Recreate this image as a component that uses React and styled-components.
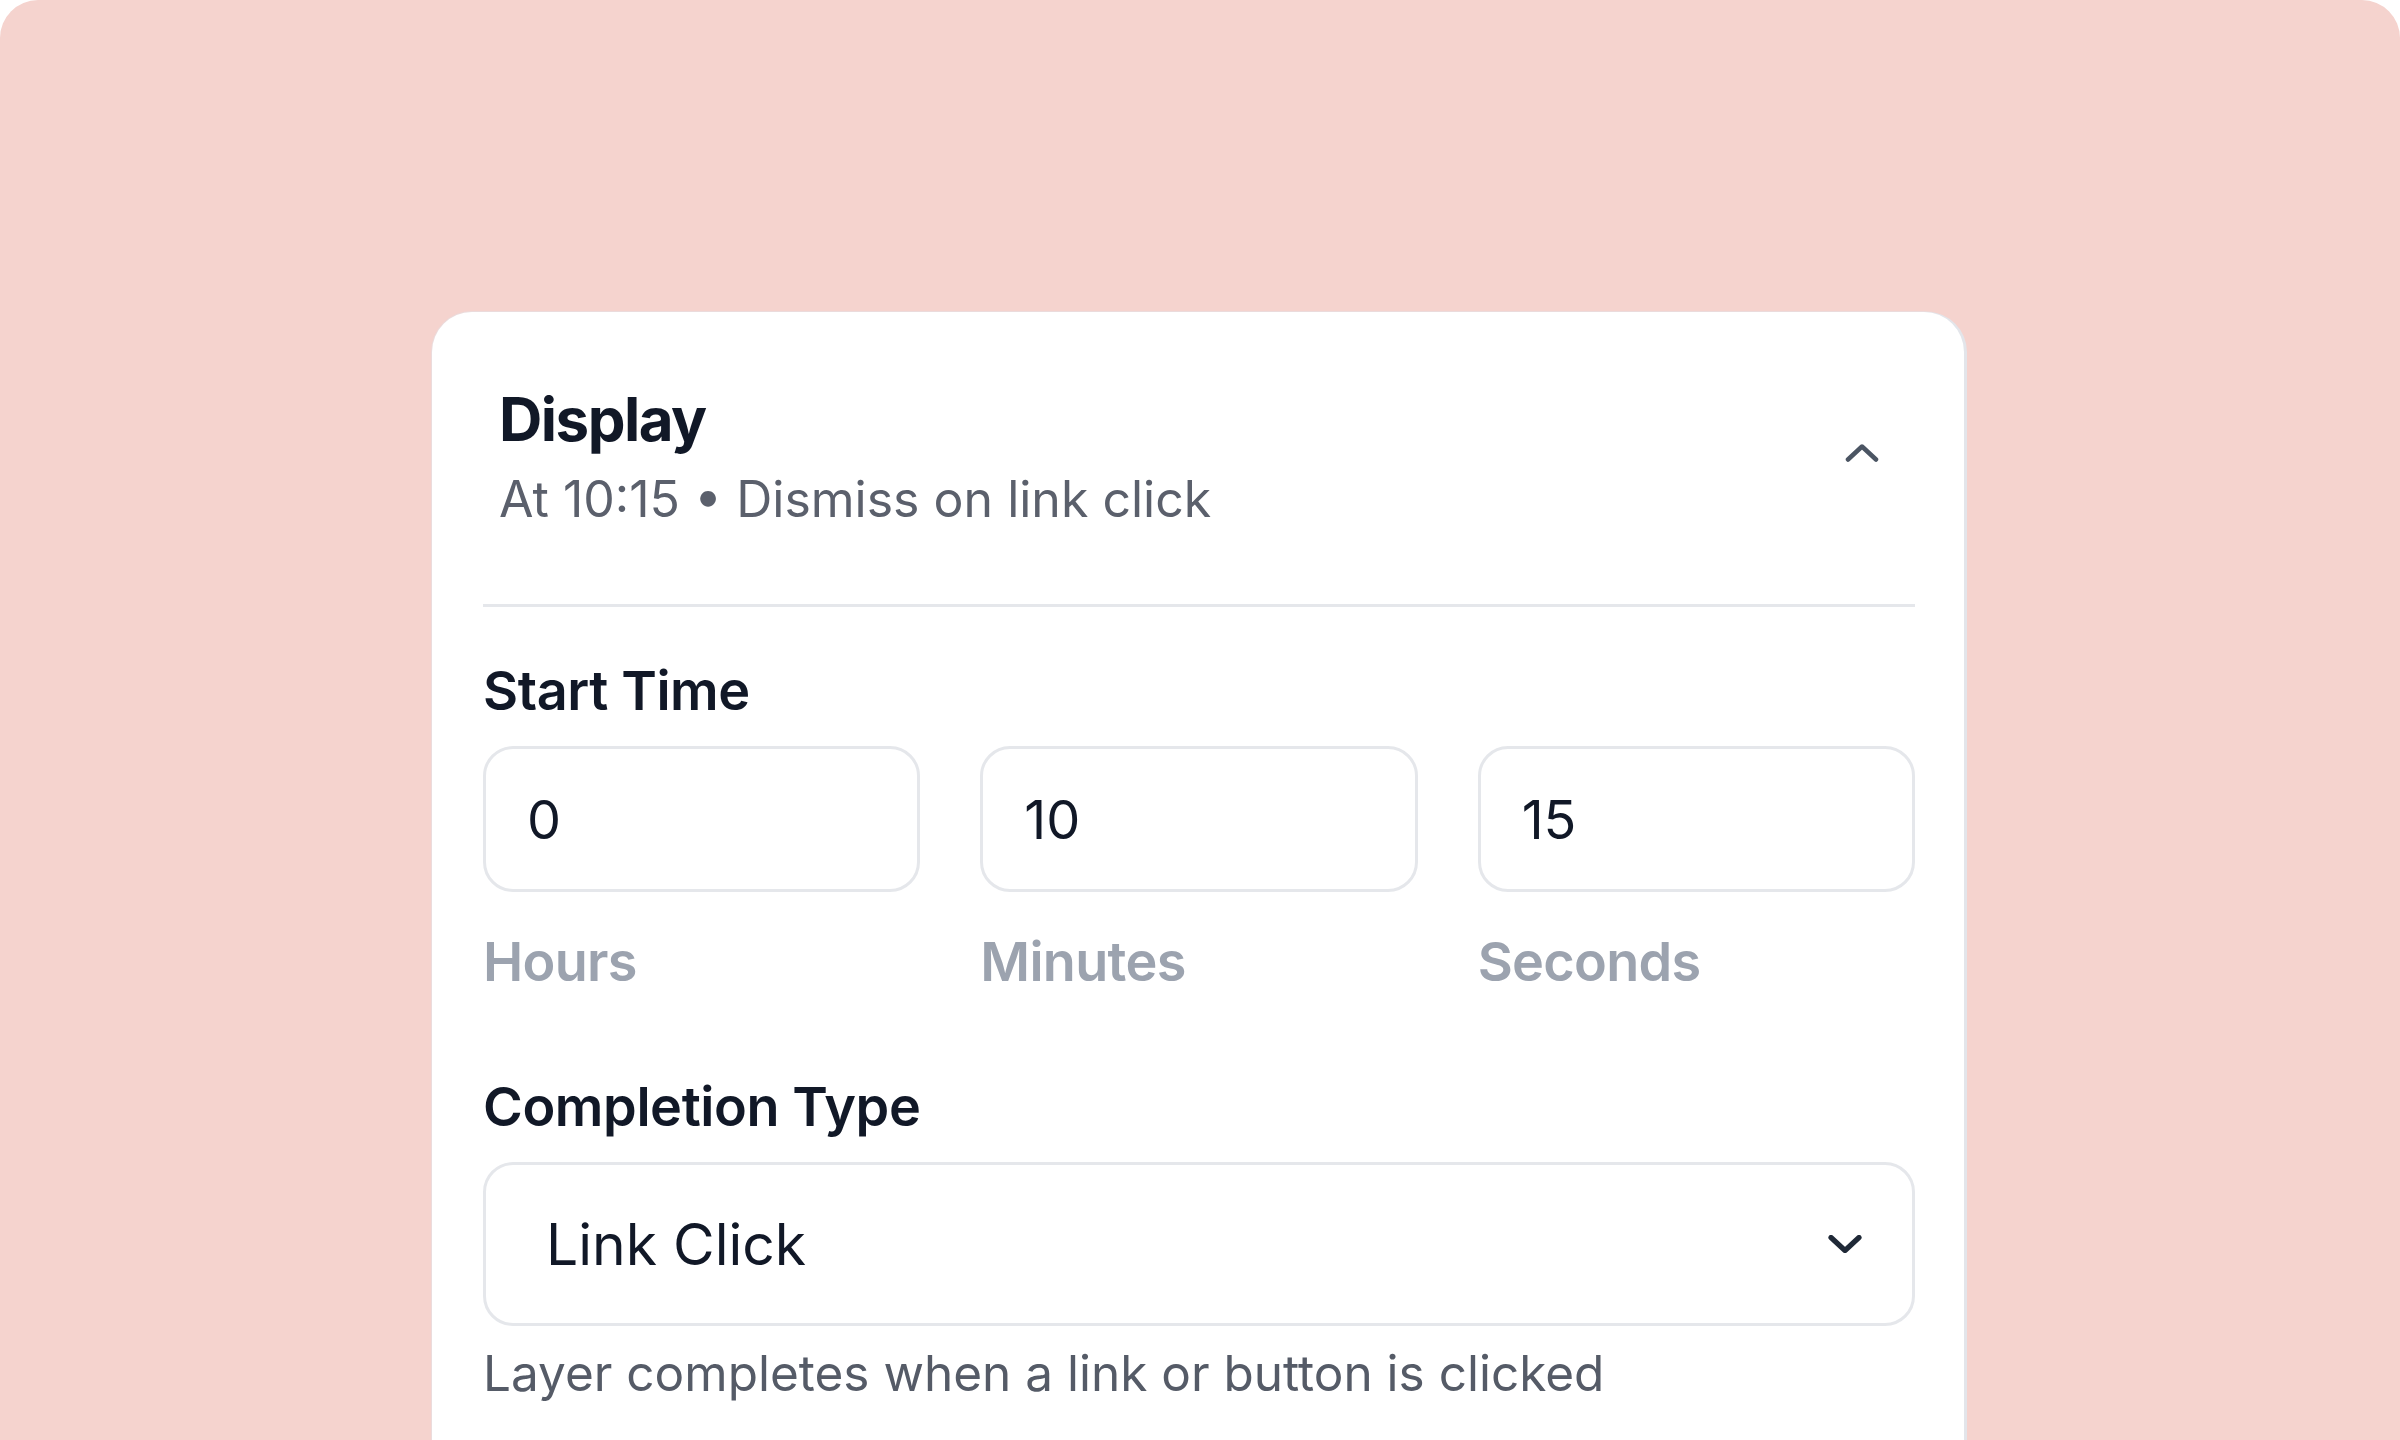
import React from "react";
import styled, { createGlobalStyle } from "styled-components";

const GlobalStyle = createGlobalStyle`
  html, body {
    margin: 0;
    padding: 0;
    background: #ffffff;
    overflow: hidden;
  }
  body {
    font-family: Inter, "Noto Sans", sans-serif;
    -webkit-font-smoothing: antialiased;
  }
  * { box-sizing: border-box; }
`;

const Panel = styled.main`
  height: 1440px;
  background: #f5d3ce;
  border-radius: 38px 38px 0 0;
  padding: 312px 0 0 432px;
  overflow: hidden;
`;

const Card = styled.section`
  width: 1532px;
  background: #ffffff;
  border-radius: 40px;
  padding: 0 49px 140px 51px;
  box-shadow: 3px 0 0 0 #e3e5ea, 0 0 0 1px rgba(226, 228, 234, 0.5);
`;

const Header = styled.header`
  display: flex;
  align-items: center;
  justify-content: space-between;
  padding: 77px 36px 80px 16px;
`;

const TitleBlock = styled.div`
  display: flex;
  flex-direction: column;
  gap: 25px;
`;

const Title = styled.h2`
  margin: 0;
  font-size: 60px;
  line-height: 1;
  font-weight: 700;
  letter-spacing: -1.5px;
  color: #111827;
`;

const Summary = styled.p`
  margin: 0;
  font-size: 50px;
  line-height: 1;
  font-weight: 400;
  color: #5b606c;
`;

const Toggle = styled.svg`
  flex: none;
  margin-bottom: 8px;
  color: #4b5563;
`;

const Divider = styled.div`
  height: 3px;
  background: #e5e7eb;
`;

const SectionLabel = styled.h3`
  margin: ${(p) => p.$mt}px 0 0;
  font-size: 54px;
  line-height: 1;
  font-weight: 600;
  letter-spacing: -0.4px;
  color: #111827;
`;

const TimeGrid = styled.div`
  display: grid;
  grid-template-columns: repeat(3, 1fr);
  gap: 60px;
  margin-top: 28px;
`;

const TimeField = styled.label`
  display: flex;
  flex-direction: column;
`;

const TimeInput = styled.input`
  width: 100%;
  height: 146px;
  border: 3px solid #e5e7eb;
  border-radius: 30px;
  padding: 0 0 0 41px;
  font-family: Inter, "Noto Sans", sans-serif;
  font-size: 54px;
  font-weight: 400;
  color: #111827;
  background: #ffffff;
  outline: none;
`;

const UnitLabel = styled.span`
  margin-top: 43px;
  font-size: 54px;
  line-height: 1;
  font-weight: 600;
  letter-spacing: -0.7px;
  color: #9ca3af;
`;

const SelectBox = styled.button`
  margin-top: 28px;
  width: 100%;
  height: 164px;
  border: 3px solid #e5e7eb;
  border-radius: 30px;
  background: #ffffff;
  display: flex;
  align-items: center;
  justify-content: space-between;
  padding: 0 50px 0 60px;
  font-family: Inter, "Noto Sans", sans-serif;
  font-size: 57px;
  font-weight: 400;
  color: #111827;
  cursor: pointer;
`;

const SelectChevron = styled.svg`
  flex: none;
  color: #1f2937;
`;

const Helper = styled.p`
  margin: 23px 0 0;
  font-size: 49.5px;
  line-height: 1;
  font-weight: 400;
  color: #555b67;
`;

const ChevronUp = () => (
  <Toggle width="34" height="18" viewBox="0 0 34 18" fill="none">
    <polyline
      points="3,15.5 17,2.5 31,15.5"
      stroke="currentColor"
      strokeWidth="4.5"
      strokeLinecap="round"
      strokeLinejoin="round"
    />
  </Toggle>
);

const ChevronDown = () => (
  <SelectChevron width="34" height="18" viewBox="0 0 34 18" fill="none">
    <polyline
      points="3,2.5 17,15.5 31,2.5"
      stroke="currentColor"
      strokeWidth="5.2"
      strokeLinecap="round"
      strokeLinejoin="round"
    />
  </SelectChevron>
);

const timeParts = [
  { value: "0", unit: "Hours" },
  { value: "10", unit: "Minutes" },
  { value: "15", unit: "Seconds" },
];

export default function App() {
  return (
    <>
      <GlobalStyle />
      <Panel>
        <Card>
          <Header>
            <TitleBlock>
              <Title>Display</Title>
              <Summary>At 10:15 • Dismiss on link click</Summary>
            </TitleBlock>
            <ChevronUp />
          </Header>
          <Divider />
          <SectionLabel $mt={57}>Start Time</SectionLabel>
          <TimeGrid>
            {timeParts.map((t) => (
              <TimeField key={t.unit}>
                <TimeInput defaultValue={t.value} />
                <UnitLabel>{t.unit}</UnitLabel>
              </TimeField>
            ))}
          </TimeGrid>
          <SectionLabel $mt={91}>Completion Type</SectionLabel>
          <SelectBox type="button">
            <span>Link Click</span>
            <ChevronDown />
          </SelectBox>
          <Helper>Layer completes when a link or button is clicked</Helper>
        </Card>
      </Panel>
    </>
  );
}
